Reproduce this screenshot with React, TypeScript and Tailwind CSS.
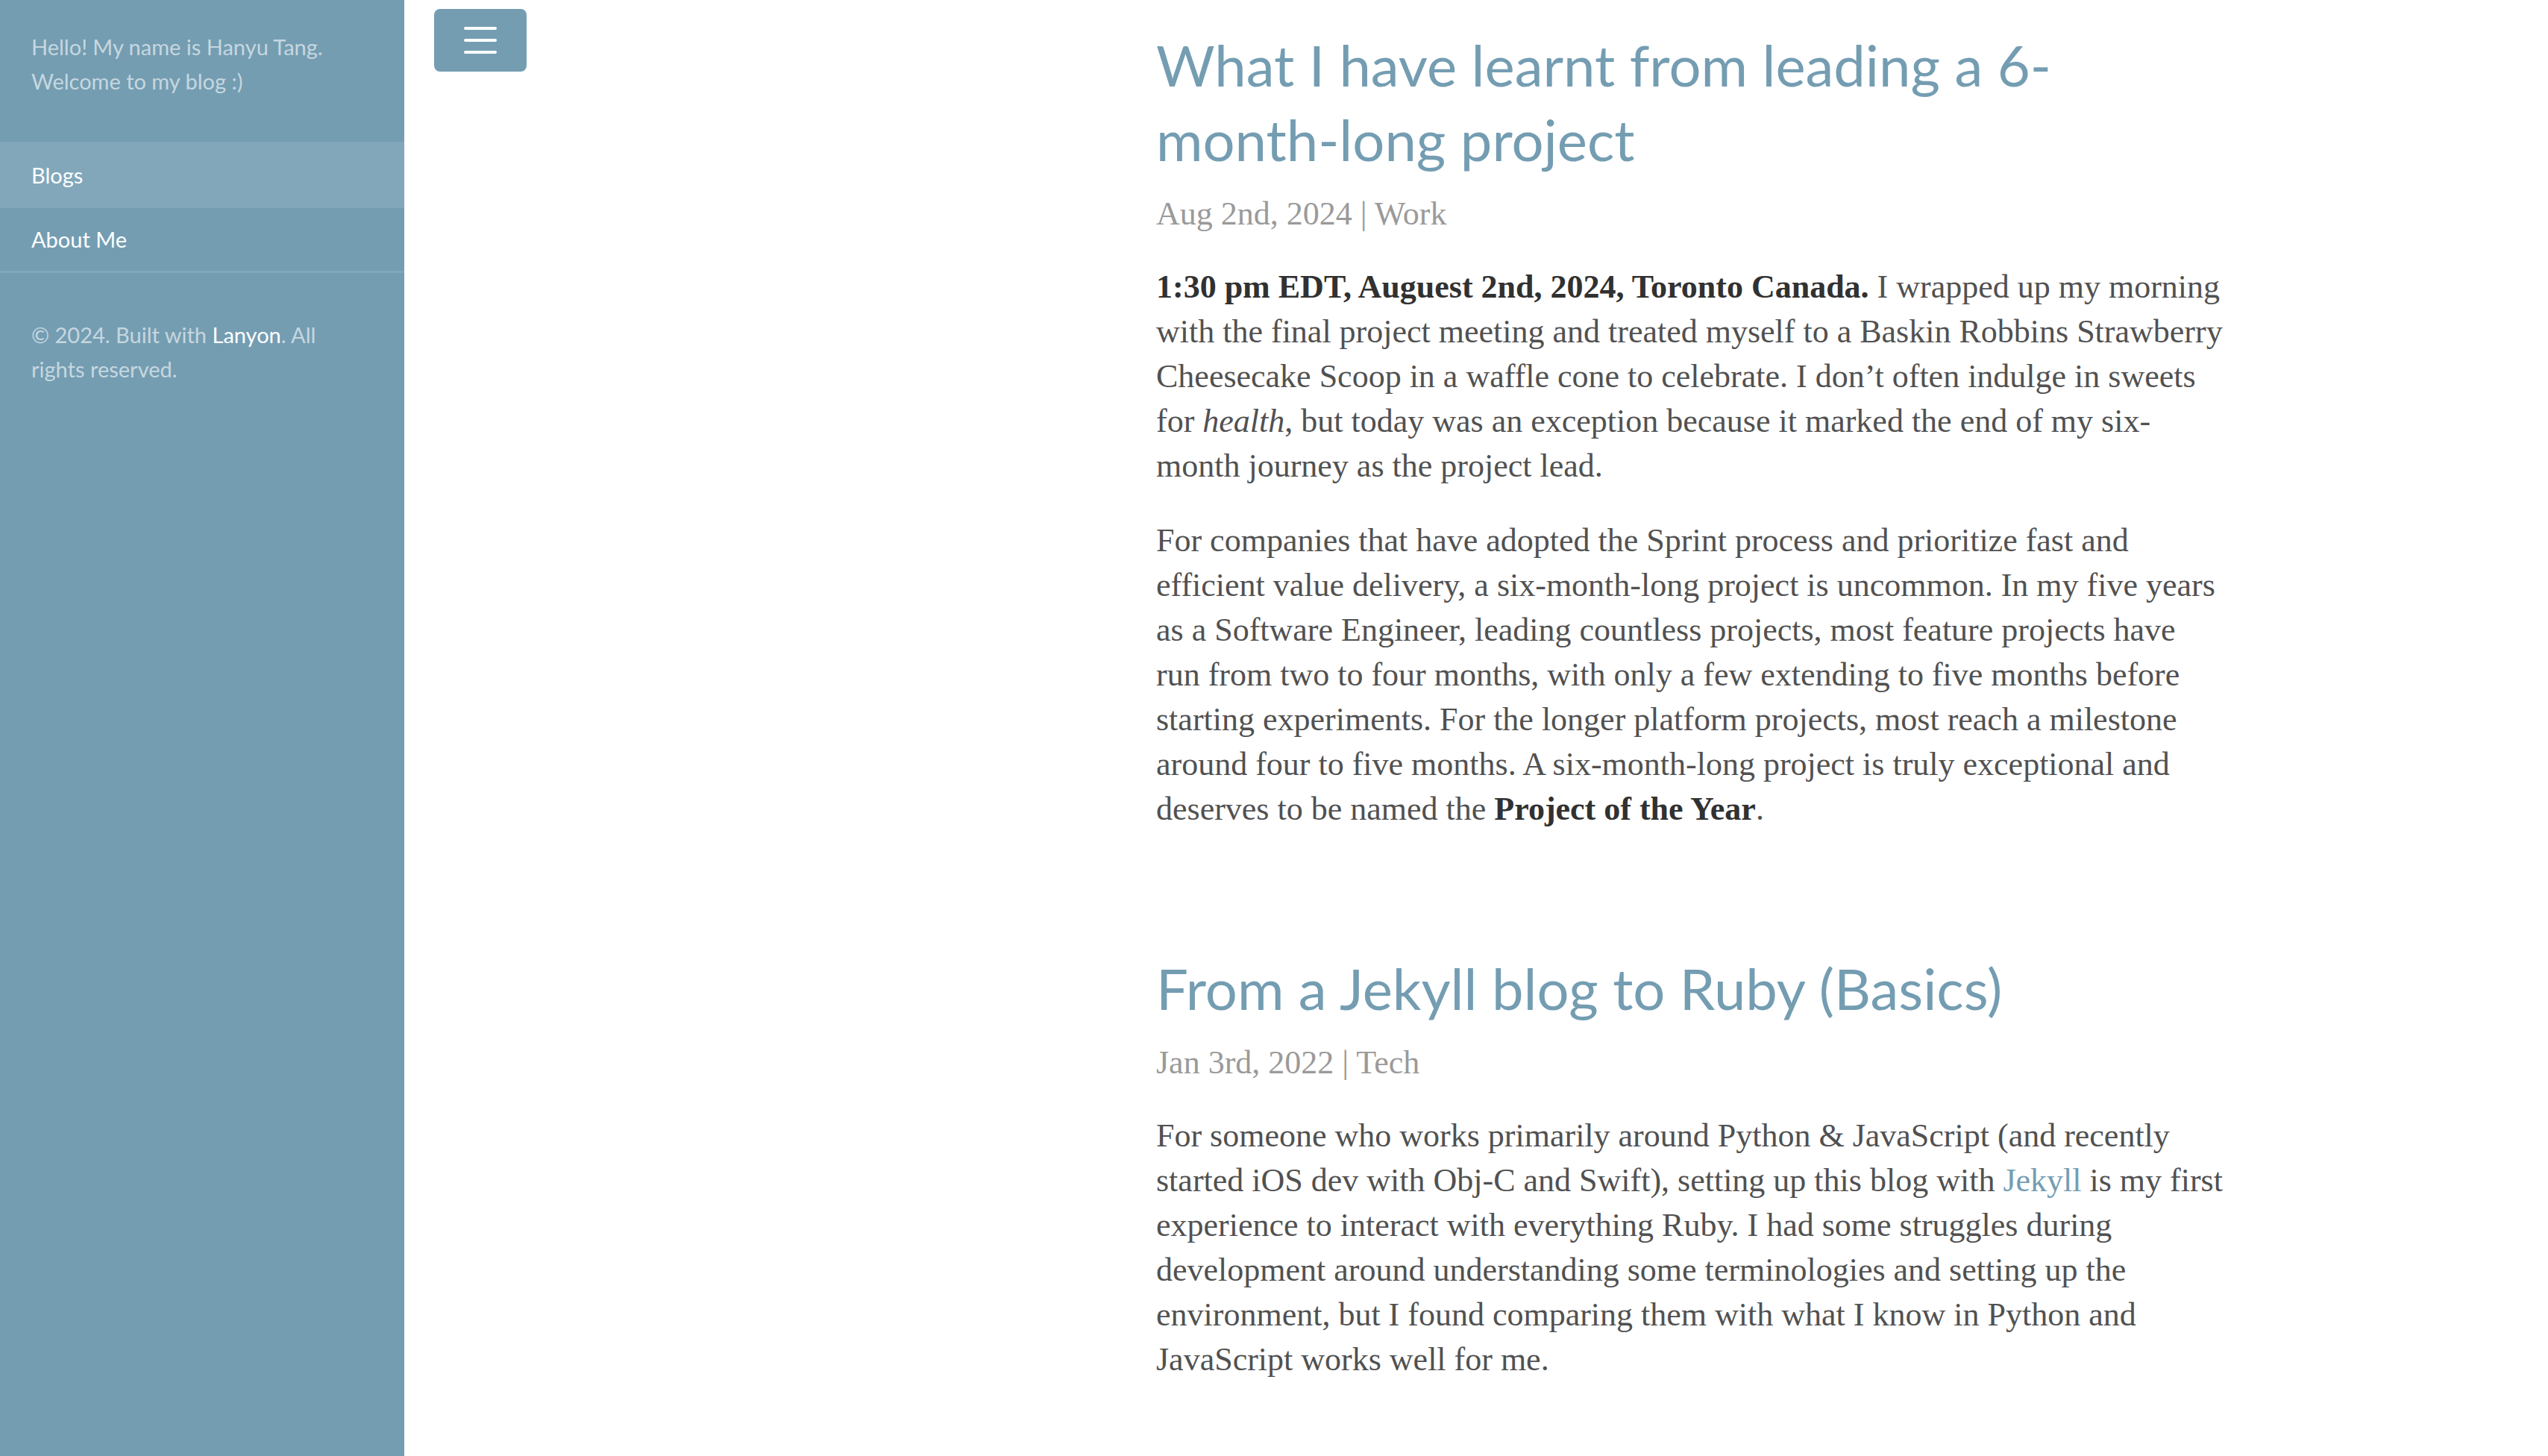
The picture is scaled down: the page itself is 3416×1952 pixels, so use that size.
import React from 'react';

const serif = "font-['Liberation_Serif','Times_New_Roman',serif]";
const sans = "font-['Lato','Liberation_Sans',sans-serif]";

function Sidebar() {
  return (
    <aside className={`w-[542px] shrink-0 bg-[#749db2] ${sans} text-[29px] leading-[46px]`}>
      <div className="px-[42px] pt-[40px] pb-[58px] text-white/60">
        Hello! My name is Hanyu Tang. Welcome to my blog :)
      </div>
      <nav className="border-b-[3px] border-white/10">
        <a href="#" className="flex h-[89px] items-center bg-white/10 px-[42px] text-white">
          Blogs
        </a>
        <a href="#" className="flex h-[84px] items-center px-[42px] text-white">
          About Me
        </a>
      </nav>
      <div className="px-[42px] pt-[60px] text-white/60">
        © 2024. Built with{' '}
        <a href="#" className="text-white">
          Lanyon
        </a>
        . All rights reserved.
      </div>
    </aside>
  );
}

function ToggleButton() {
  return (
    <button className="flex h-[84px] w-[124px] flex-col items-center justify-center gap-[12px] rounded-[8px] bg-[#749db2]">
      <span className="block h-[4px] w-[44px] rounded-full bg-white" />
      <span className="block h-[4px] w-[44px] rounded-full bg-white" />
      <span className="block h-[4px] w-[44px] rounded-full bg-white" />
    </button>
  );
}

function Post({
  title,
  date,
  category,
  children,
}: {
  title: string;
  date: string;
  category: string;
  children: React.ReactNode;
}) {
  return (
    <article className="mb-[160px]">
      <h1 className={`${sans} mb-[20px] text-[76px] font-normal leading-[100px] text-[#749db2]`}>{title}</h1>
      <div className="mb-[38px] text-[#9a9a9a]">
        {date} | {category}
      </div>
      {children}
    </article>
  );
}

export default function App() {
  return (
    <div className="flex min-h-screen bg-white">
      <Sidebar />
      <main className="flex flex-1">
        <div className="w-[1008px] shrink-0 pl-[40px] pt-[12px]">
          <ToggleButton />
        </div>
        <div className={`w-[1434px] pt-[37px] ${serif} text-[44px] leading-[60px] text-[#515151]`}>
          <Post title="What I have learnt from leading a 6-month-long project" date="Aug 2nd, 2024" category="Work">
            <p className="mb-[40px]">
              <strong className="font-bold text-[#313131]">1:30 pm EDT, Auguest 2nd, 2024, Toronto Canada.</strong> I
              wrapped up my morning with the final project meeting and treated myself to a Baskin Robbins Strawberry
              Cheesecake Scoop in a waffle cone to celebrate. I don’t often indulge in sweets for <em>health</em>, but
              today was an exception because it marked the end of my six-month journey as the project lead.
            </p>
            <p className="mb-[40px]">
              For companies that have adopted the Sprint process and prioritize fast and efficient value delivery, a
              six-month-long project is uncommon. In my five years as a Software Engineer, leading countless projects,
              most feature projects have run from two to four months, with only a few extending to five months before
              starting experiments. For the longer platform projects, most reach a milestone around four to five months.
              A six-month-long project is truly exceptional and deserves to be named the{' '}
              <strong className="font-bold text-[#313131]">Project of the Year</strong>.
            </p>
          </Post>
          <Post title="From a Jekyll blog to Ruby (Basics)" date="Jan 3rd, 2022" category="Tech">
            <p className="mb-[40px]">
              For someone who works primarily around Python &amp; JavaScript (and recently started iOS dev with Obj-C
              and Swift), setting up this blog with{' '}
              <a href="#" className="text-[#749db2]">
                Jekyll
              </a>{' '}
              is my first experience to interact with everything Ruby. I had some struggles during development around
              understanding some terminologies and setting up the environment, but I found comparing them with what I
              know in Python and JavaScript works well for me.
            </p>
          </Post>
        </div>
      </main>
    </div>
  );
}
